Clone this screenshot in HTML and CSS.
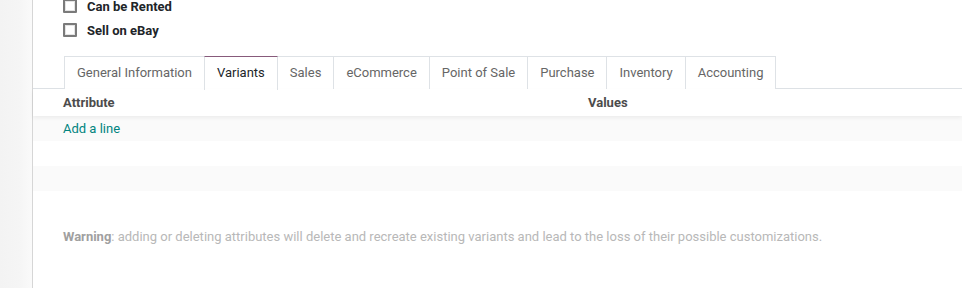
FILE: index.html
```html
<!DOCTYPE html>
<html>
<head>
<meta charset="utf-8">
<link rel="stylesheet" href="styles.css">
</head>
<body>
<div class="page">
  <div class="gutter"></div>
  <div class="sheet">
    <div class="checks">
      <label class="check"><span class="box"></span><span class="check-label">Can be Rented</span></label>
      <label class="check"><span class="box"></span><span class="check-label">Sell on eBay</span></label>
    </div>
    <div class="tabs">
      <div class="tab">General Information</div>
      <div class="tab active">Variants</div>
      <div class="tab">Sales</div>
      <div class="tab">eCommerce</div>
      <div class="tab">Point of Sale</div>
      <div class="tab">Purchase</div>
      <div class="tab">Inventory</div>
      <div class="tab">Accounting</div>
    </div>
    <div class="list">
      <div class="list-head">
        <div class="col-attr">Attribute</div>
        <div class="col-val">Values</div>
      </div>
      <div class="row odd"><a class="add-line">Add a line</a></div>
      <div class="row"></div>
      <div class="row odd"></div>
      <div class="row"></div>
    </div>
    <p class="warning"><b>Warning</b>: adding or deleting attributes will delete and recreate existing variants and lead to the loss of their possible customizations.</p>
  </div>
</div>
</body>
</html>
```

FILE: styles.css
```css
* { box-sizing: border-box; }
html, body { margin: 0; padding: 0; }
body {
  font-family: Roboto, "Noto Sans", sans-serif;
  font-size: 13px;
  color: #212529;
  background: #fff;
  width: 962px;
  height: 288px;
  overflow: hidden;
}
.page {
  display: flex;
  height: 288px;
}
.gutter {
  width: 33px;
  flex: none;
  background: linear-gradient(to right, #f3f3f3 0%, #f5f5f5 60%, #fafafa 100%);
  border-right: 1px solid #d6d6d6;
}
.sheet {
  flex: 1;
  background: #fff;
  min-width: 0;
}
.checks {
  display: flex;
  flex-direction: column;
  padding-left: 30px;
  margin-top: -6px;
}
.check {
  display: flex;
  align-items: center;
  height: 24px;
}
.box {
  width: 14px;
  height: 14px;
  border: 2px solid #7a7a7a;
  border-radius: 1px;
  background: #fff;
  box-shadow: inset 0 0 0 1px #e4e4e4;
  flex: none;
}
.check-label {
  margin-left: 10px;
  font-weight: 700;
  color: #212529;
}
.tabs {
  display: flex;
  margin-top: 14px;
  padding-left: 30px;
  border-bottom: 1px solid #dee2e6;
  height: 33px;
}
.tab {
  height: 33px;
  padding: 0 12px 1px;
  display: flex;
  align-items: center;
  border: 1px solid #dee2e6;
  border-bottom: none;
  margin-left: -1px;
  color: #666;
  background: #fff;
}
.tab:first-child { margin-left: 1px; }
.tab.active {
  border-top: 1px solid #875a7b;
  color: #212529;
  margin-bottom: -1px;
  position: relative;
  z-index: 1;
  padding-bottom: 2px;
  height: 34px;
}
.list-head {
  display: grid;
  grid-template-columns: 525px 1fr;
  height: 27px;
  align-items: center;
  padding-left: 30px;
  font-weight: 700;
  color: #4c4c4c;
  position: relative;
  z-index: 1;
  box-shadow: 0 2px 4px rgba(0,0,0,0.06);
}
.row {
  height: 25px;
  padding-left: 30px;
  display: flex;
  align-items: center;
}
.row.odd { background: #fafafa; }
.add-line {
  color: #01847f;
  cursor: pointer;
}
.warning {
  margin: 13px 0 0;
  padding-left: 30px;
  color: #b8b8b8;
  font-size: 13px;
}
.warning b { color: #a0a0a0; }
```
